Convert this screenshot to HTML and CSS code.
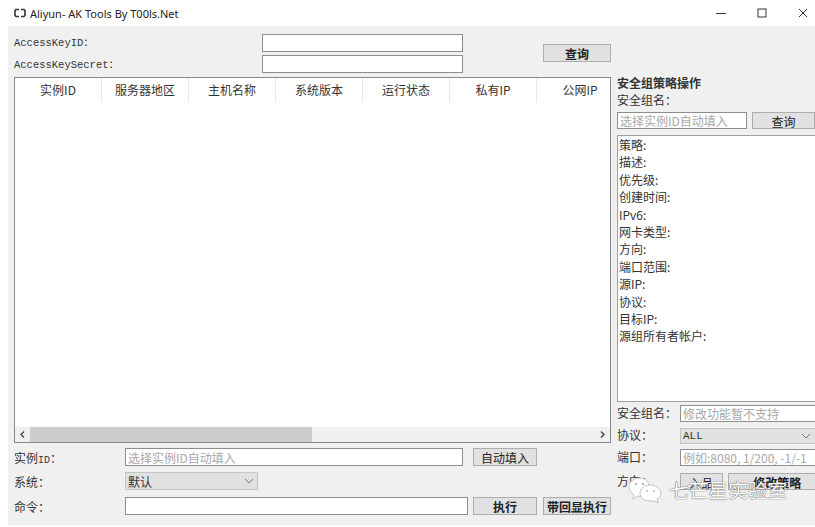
FILE: index.html
```html
<!DOCTYPE html>
<html lang="en">
<head>
  <meta charset="UTF-8">
  <title>Aliyun- AK Tools By T00ls.Net</title>
  <link rel="stylesheet" href="styles.css">
</head>
<body>
  <div class="titlebar">
    <svg class="app-icon" width="12" height="10" viewBox="0 0 12 10"><path d="M5 1.500H2L1 2.500V7.500L2 8.500H5M7 1.500H10L11 2.500V7.500L10 8.500H7" fill="none" stroke="#333" stroke-width="1.600"/></svg>
    <span class="app-title">Aliyun- AK Tools By T00ls.Net</span>
    <div class="win-buttons">
      <svg width="10" height="10" viewBox="0 0 10 10"><path d="M0 5.500H10" stroke="#333"/></svg>
      <svg width="10" height="10" viewBox="0 0 10 10"><rect x="1" y="1" width="8" height="8" fill="none" stroke="#333"/></svg>
      <svg width="10" height="10" viewBox="0 0 10 10"><path d="M1 1L9 9M9 1L1 9" stroke="#333"/></svg>
    </div>
  </div>

  <div class="window">
    <div class="left">
      <div class="key-form">
        <div class="key-labels">
          <label>AccessKeyID：</label>
          <label>AccessKeySecret：</label>
        </div>
        <div class="key-inputs">
          <input type="text" class="field">
          <input type="text" class="field">
        </div>
        <button class="btn btn-query">查询</button>
      </div>

      <div class="table">
        <div class="table-head">
          <div class="th">实例ID</div>
          <div class="th">服务器地区</div>
          <div class="th">主机名称</div>
          <div class="th">系统版本</div>
          <div class="th">运行状态</div>
          <div class="th">私有IP</div>
          <div class="th">公网IP</div>
        </div>
        <div class="table-body"></div>
        <div class="scrollbar">
          <svg class="arrow" width="15" height="15" viewBox="0 0 15 15"><path d="M9 4.500L6 7.500L9 10.500" fill="none" stroke="#444" stroke-width="1.300"/></svg>
          <div class="thumb-track"><div class="thumb"></div></div>
          <svg class="arrow" width="15" height="15" viewBox="0 0 15 15"><path d="M6 4.500L9 7.500L6 10.500" fill="none" stroke="#444" stroke-width="1.300"/></svg>
        </div>
      </div>

      <div class="cmd-row row-id">
        <label class="cmd-label">实例<span class="mono">ID</span>：</label>
        <input type="text" class="field input-id" placeholder="选择实例ID自动填入">
        <button class="btn btn-fill">自动填入</button>
      </div>
      <div class="cmd-row row-sys">
        <label class="cmd-label">系统：</label>
        <div class="select select-sys">默认<svg width="10" height="6" viewBox="0 0 10 6"><path d="M1 1L5 5L9 1" fill="none" stroke="#777"/></svg></div>
      </div>
      <div class="cmd-row row-cmd">
        <label class="cmd-label">命令：</label>
        <input type="text" class="field input-cmd">
        <button class="btn btn-run">执行</button>
        <button class="btn btn-echo">带回显执行</button>
      </div>
    </div>

    <div class="right">
      <div class="panel-title">安全组策略操作</div>
      <div class="panel-label">安全组名：</div>
      <div class="group-row">
        <input type="text" class="field input-group" placeholder="选择实例ID自动填入">
        <button class="btn btn-group">查询</button>
      </div>
      <div class="details">
        <div>策略:</div>
        <div>描述:</div>
        <div>优先级:</div>
        <div>创建时间:</div>
        <div>IPv6:</div>
        <div>网卡类型:</div>
        <div>方向:</div>
        <div>端口范围:</div>
        <div>源IP:</div>
        <div>协议:</div>
        <div>目标IP:</div>
        <div>源组所有者帐户:</div>
      </div>
      <div class="edit-row edit-name">
        <label>安全组名：</label>
        <input type="text" class="field" placeholder="修改功能暂不支持">
      </div>
      <div class="edit-row edit-proto">
        <label>协议：</label>
        <div class="select select-proto"><span class="mono">ALL</span><svg width="10" height="6" viewBox="0 0 10 6"><path d="M1 1L5 5L9 1" fill="none" stroke="#777"/></svg></div>
      </div>
      <div class="edit-row edit-port">
        <label>端口：</label>
        <input type="text" class="field" placeholder="例如:8080, 1/200, -1/-1">
      </div>
      <div class="edit-row edit-dir">
        <label>方向：</label>
        <button class="btn btn-dir">入品</button>
        <button class="btn btn-edit">修改策略</button>
      </div>
    </div>
  </div>

  <!-- watermark over the bottom right corner -->
  <div class="watermark">
    <svg width="34" height="27" viewBox="0 0 34 27">
      <path d="M12 1C5 1 1 5 1 10C1 13 3 16 6 18L5 22L10 19C11 19 13 20 14 20L21 8C20 4 17 1 12 1Z" fill="#fff" stroke="#b5b5b5" stroke-width="0.800"/>
      <path d="M22 8C16 8 12 12 12 16C12 21 16 24 22 24C23 24 25 24 26 24L30 26L29 22C32 21 33 19 33 16C33 12 28 8 22 8Z" fill="#fff" stroke="#b5b5b5" stroke-width="0.800"/>
      <circle cx="8" cy="7" r="1.200" fill="#bbb"/><circle cx="15" cy="7" r="1.200" fill="#bbb"/>
      <circle cx="19" cy="14" r="1" fill="#bbb"/><circle cx="26" cy="14" r="1" fill="#bbb"/>
    </svg>
    <span class="watermark-text">七芒星实验室</span>
  </div>
</body>
</html>
```

FILE: styles.css
```css
* {
  box-sizing: border-box;
}
html, body {
  height: 100%;
}
body {
  margin: 0;
  overflow: hidden;
  position: relative;
  background-color: #fff;
  font-family: "Noto Sans CJK SC", sans-serif;
  font-size: 12px;
  color: #333;
}
.mono {
  font-family: "Liberation Mono", monospace;
  font-size: 10px;
}

/* Title bar */
.titlebar {
  display: flex;
  align-items: center;
  height: 26px;
  padding-left: 14px;
  font-family: "Noto Sans", "Noto Sans CJK SC", sans-serif;
}
.app-icon {
  margin-right: 4px;
}
.app-title {
  font-size: 11px;
  color: #222;
}
.win-buttons {
  display: flex;
  gap: 31px;
  margin-left: auto;
  margin-right: 7px;
}

/* Main window */
.window {
  display: flex;
  gap: 6px;
  height: 499px;
  margin-left: 8px;
  padding-left: 6px;
  background-color: #f0f0f0;
}
.left {
  flex: none;
  width: 597px;
}
.right {
  flex: none;
  width: 210px;
}

/* Shared controls */
.field {
  height: 18px;
  margin: 0;
  padding: 0 2px;
  border: 1px solid #8e8e8e;
  border-radius: 0;
  background-color: #fff;
  font: inherit;
  outline: none;
}
.field::placeholder {
  color: #a8a8a8;
  opacity: 1;
}
.btn {
  height: 18px;
  padding: 0;
  border: 1px solid #adadad;
  border-radius: 0;
  background-color: #e1e1e1;
  font: inherit;
  font-weight: bold;
  color: #222;
}
.select {
  display: flex;
  align-items: center;
  justify-content: space-between;
  height: 18px;
  padding: 0 3px 0 2px;
  border: 1px solid #c4c4c4;
  background-color: #e1e1e1;
}

/* Access key form */
.key-form {
  display: flex;
  height: 51px;
}
.key-labels {
  display: flex;
  flex-direction: column;
  gap: 9px;
  width: 248px;
  padding-top: 11px;
  font-family: "Liberation Mono", "Noto Sans CJK SC", monospace;
  font-size: 10.500px;
}
.key-labels label {
  line-height: 13px;
}
.key-inputs {
  display: flex;
  flex-direction: column;
  gap: 3px;
  width: 201px;
  padding-top: 8px;
}
.btn-query {
  width: 68px;
  margin-top: 18px;
  margin-left: 80px;
}

/* Instance table */
.table {
  display: flex;
  flex-direction: column;
  height: 366px;
  border: 1px solid #828790;
  background-color: #fff;
}
.table-head {
  display: flex;
  flex: none;
  height: 24px;
  overflow: hidden;
}
.th {
  flex: none;
  width: 87px;
  border-right: 1px solid #e8e8e8;
  line-height: 24px;
  text-align: center;
}
.table-body {
  flex: 1;
}
.scrollbar {
  display: flex;
  flex: none;
  height: 15px;
  background-color: #f0f0f0;
}
.arrow {
  flex: none;
}
.thumb-track {
  flex: 1;
}
.thumb {
  width: 282px;
  height: 100%;
  background-color: #cdcdcd;
}

/* Command rows */
.cmd-row {
  display: flex;
  align-items: center;
}
.row-id {
  margin-top: 5px;
}
.row-sys {
  margin-top: 6px;
}
.row-cmd {
  margin-top: 7px;
}
.cmd-label {
  width: 111px;
}
.input-id {
  width: 338px;
}
.btn-fill {
  width: 64px;
  margin-left: 10px;
  font-weight: normal;
}
.select-sys {
  width: 133px;
}
.input-cmd {
  width: 343px;
}
.btn-run {
  width: 64px;
  margin-left: 5px;
}
.btn-echo {
  width: 68px;
  margin-left: 6px;
}

/* Security group panel */
.panel-title {
  margin-top: 49px;
  font-weight: bold;
  line-height: 15px;
}
.panel-label {
  margin-top: 2px;
  line-height: 15px;
}
.group-row {
  display: flex;
  gap: 5px;
  margin-top: 5px;
}
.input-group {
  width: 130px;
  height: 17px;
}
.btn-group {
  width: 63px;
  height: 17px;
  font-weight: normal;
}
.details {
  height: 267px;
  margin-top: 6px;
  padding: 0 1px;
  border: 1px solid #a0a0a0;
  background-color: #fff;
  line-height: 17.400px;
}
.edit-row {
  display: flex;
  align-items: center;
}
.edit-row label {
  flex: none;
  width: 63px;
  padding-bottom: 3px;
  line-height: 13px;
}
.edit-row .field {
  width: 146px;
  height: 17px;
}
.edit-name {
  margin-top: 3px;
}
.edit-proto {
  margin-top: 6px;
}
.edit-port {
  margin-top: 5px;
}
.edit-dir {
  margin-top: 7px;
}
.select-proto {
  width: 140px;
  height: 16px;
  padding-right: 8px;
}
.select-proto .mono {
  font-size: 11px;
}
.btn-dir {
  width: 43px;
  height: 17px;
  font-weight: normal;
}
.btn-edit {
  width: 100px;
  height: 17px;
  margin-left: 5px;
}

/* Watermark */
.watermark {
  position: absolute;
  left: 628px;
  top: 477px;
  display: flex;
  gap: 7px;
}
.watermark-text {
  margin-top: -1px;
  font-size: 19.700px;
  line-height: 27px;
  color: #fff;
  text-shadow: 0 0 1px #555, 0 0 1px #555;
}
```
